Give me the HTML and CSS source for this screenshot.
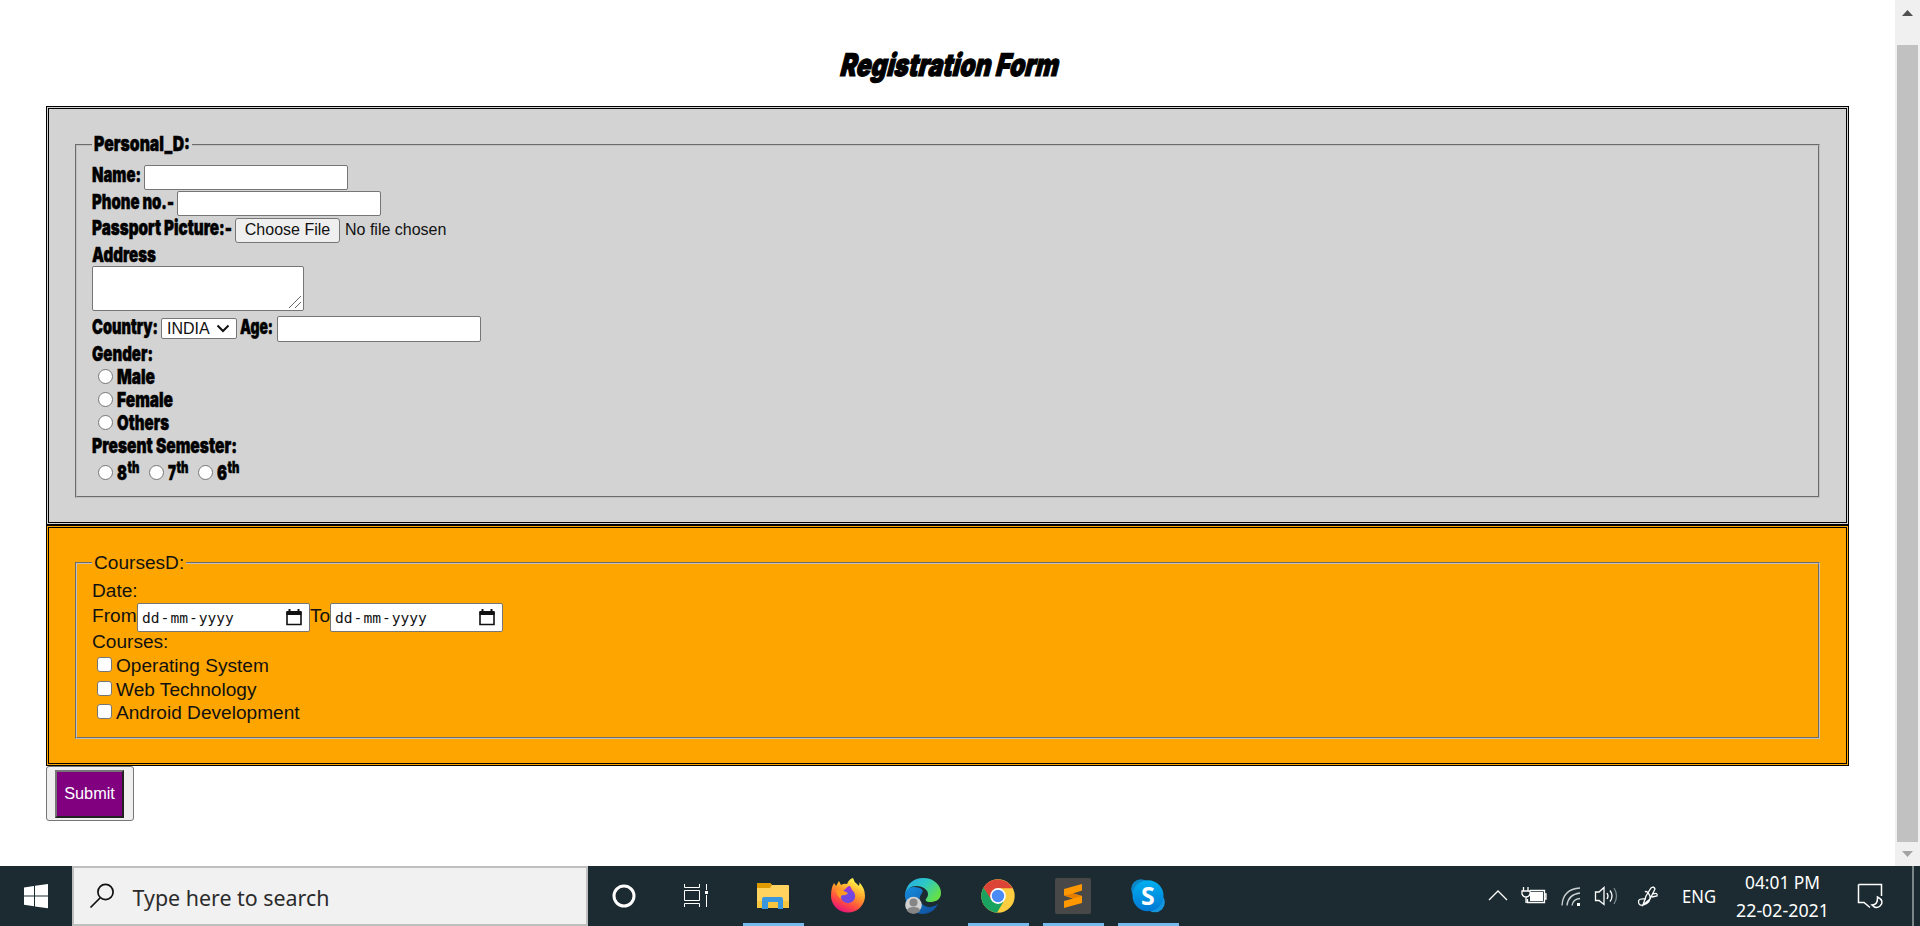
FILE: index.html
```html
<!DOCTYPE html>
<html lang="en">
<head>
<meta charset="utf-8">
<title>Registration Form</title>
<link rel="stylesheet" href="styles.css">
</head>
<body>
<div class="window">
  <main class="page">
    <h1 class="title"><svg class="heading" width="240" height="40"><text transform="translate(2 32) skewX(-14)" textLength="218" lengthAdjust="spacingAndGlyphs">Registration Form</text></svg></h1>
    <form class="form">
      <section class="panel personal">
        <fieldset class="group">
          <legend class="legend"><svg class="label" width="96" height="24"><text y="18" textLength="96" lengthAdjust="spacingAndGlyphs">Personal_D:</text></svg></legend>
          <div class="row name"><svg class="label" width="52" height="24"><text y="18" textLength="49" lengthAdjust="spacingAndGlyphs">Name:</text></svg><span class="box input"></span></div>
          <div class="row phone"><svg class="label" width="85" height="24"><text y="18" textLength="82" lengthAdjust="spacingAndGlyphs">Phone no.-</text></svg><span class="box input"></span></div>
          <div class="row picture"><svg class="label" width="143" height="24"><text y="18" textLength="140" lengthAdjust="spacingAndGlyphs">Passport Picture:-</text></svg><span class="box file">Choose File</span><span class="nofile">No file chosen</span></div>
          <div class="row address"><svg class="label" width="70" height="22"><text y="18" textLength="64" lengthAdjust="spacingAndGlyphs">Address</text></svg></div>
          <div class="box textarea"><svg width="14" height="14" viewBox="0 0 14 14"><path d="M1 13L13 1M7 13L13 7" stroke="#666" fill="none"/></svg></div>
          <div class="row country"><svg class="label" width="69" height="24"><text y="18" textLength="66" lengthAdjust="spacingAndGlyphs">Country:</text></svg><span class="box select">INDIA<svg width="14" height="9" viewBox="0 0 14 9"><path d="M1.5 1.5L7 7L12.500 1.500" fill="none" stroke="#111" stroke-width="2"/></svg></span><svg class="label" width="37" height="24"><text y="18" textLength="33" lengthAdjust="spacingAndGlyphs">Age:</text></svg><span class="box input age"></span></div>
          <div class="row"><svg class="label" width="70" height="23"><text y="18" textLength="61" lengthAdjust="spacingAndGlyphs">Gender:</text></svg></div>
          <div class="row"><i class="radio"></i><svg class="label" width="60" height="23"><text y="18" textLength="38" lengthAdjust="spacingAndGlyphs">Male</text></svg></div>
          <div class="row"><i class="radio"></i><svg class="label" width="60" height="23"><text y="18" textLength="56" lengthAdjust="spacingAndGlyphs">Female</text></svg></div>
          <div class="row"><i class="radio"></i><svg class="label" width="60" height="23"><text y="18" textLength="52" lengthAdjust="spacingAndGlyphs">Others</text></svg></div>
          <div class="row"><svg class="label" width="150" height="23"><text y="18" textLength="145" lengthAdjust="spacingAndGlyphs">Present Semester:</text></svg></div>
          <div class="row semester">
            <i class="radio"></i><svg class="label" width="26" height="23"><text y="18" textLength="10" lengthAdjust="spacingAndGlyphs">8</text><text class="sup" x="10.500" y="11" textLength="12" lengthAdjust="spacingAndGlyphs">th</text></svg>
            <i class="radio"></i><svg class="label" width="24" height="23"><text y="18" textLength="8" lengthAdjust="spacingAndGlyphs">7</text><text class="sup" x="8.500" y="11" textLength="12" lengthAdjust="spacingAndGlyphs">th</text></svg>
            <i class="radio"></i><svg class="label" width="26" height="23"><text y="18" textLength="10" lengthAdjust="spacingAndGlyphs">6</text><text class="sup" x="10.500" y="11" textLength="12" lengthAdjust="spacingAndGlyphs">th</text></svg>
          </div>
        </fieldset>
      </section>
      <section class="panel courses">
        <fieldset class="group">
          <legend class="legend">CoursesD:</legend>
          <div class="line">Date:</div>
          <div class="dates"><span class="word from">From</span><span class="box date"><span class="mono"><b>dd</b><b>-</b><b>mm</b><b>-</b><b>yyyy</b></span><svg width="16" height="17" viewBox="0 0 16 17"><path d="M1 3.500H15V15.500H1Z" fill="none" stroke="#111" stroke-width="1.600"/><path d="M.5 2H15.500V6H.5ZM2.500 0H4.500V3H2.500ZM11.500 0H13.500V3H11.500Z" fill="#111"/></svg></span><span class="word to">To</span><span class="box date"><span class="mono"><b>dd</b><b>-</b><b>mm</b><b>-</b><b>yyyy</b></span><svg width="16" height="17" viewBox="0 0 16 17"><path d="M1 3.500H15V15.500H1Z" fill="none" stroke="#111" stroke-width="1.600"/><path d="M.5 2H15.500V6H.5ZM2.500 0H4.500V3H2.500ZM11.500 0H13.500V3H11.500Z" fill="#111"/></svg></span></div>
          <div class="line caption">Courses:</div>
          <div class="line option"><i class="check"></i>Operating System</div>
          <div class="line option"><i class="check"></i>Web Technology</div>
          <div class="line option"><i class="check"></i>Android Development</div>
        </fieldset>
      </section>
      <div class="submit-outer"><span class="submit">Submit</span></div>
    </form>
  </main>
  <div class="scrollbar">
    <svg width="25" height="45" viewBox="0 0 25 45"><path d="M7 16L12.500 10L18 16Z" fill="#505050"/></svg>
    <div class="thumb"></div>
    <svg width="25" height="24" viewBox="0 0 25 24"><path d="M7 9L12.500 15L18 9Z" fill="#a3a3a3"/></svg>
  </div>
</div>
<footer class="taskbar">
  <svg width="72" height="60" viewBox="0 866 72 60"><path fill="#fff" d="M24 887.400L34 886V895.500H24ZM35 885.800L48 884V895.500H35ZM24 896.500H34V906.200L24 904.800ZM35 896.500H48V908.200L35 906.400Z"/></svg>
  <div class="search">
    <svg width="58" height="56" viewBox="74 868 58 56"><circle cx="105.500" cy="892" r="7.600" fill="none" stroke="#111" stroke-width="1.700"/><path d="M100 898L90.500 907.500" stroke="#111" stroke-width="1.700"/></svg>
    <svg class="ui dark" width="210" height="56" viewBox="132 868 210 56"><text x="132.500" y="905.500" font-size="22" textLength="197" lengthAdjust="spacingAndGlyphs">Type here to search</text></svg>
  </div>
  <svg width="73" height="60" viewBox="588 866 73 60"><circle cx="624" cy="896" r="10" fill="none" stroke="#fff" stroke-width="3"/></svg>
  <svg width="75" height="60" viewBox="661 866 75 60"><path d="M684.500 884V887.500H699.500V884M684.500 890.500H699.500V900.500H684.500ZM684.500 907V903.500H699.500V907M706.500 884V890M706.500 895V907" fill="none" stroke="#fff" stroke-width="1"/><path d="M705 891H708V894H705Z" fill="#fff"/></svg>
  <svg width="75" height="60" viewBox="736 866 75 60"><path d="M757 884Q757 883 758 883H770L772 885H788Q789 885 789 886V908H757Z" fill="#ffd35e"/><path d="M757 884Q757 883 758 883H770L772 885L770 888H757Z" fill="#e09b00"/><path d="M757 901H789V908H757Z" fill="#f8c63e"/><path d="M762 909V899Q762 897 764 897H781Q783 897 783 899V909H778V902H768V909Z" fill="#3a96dd"/><path d="M743 923H804V926H743Z" fill="#76b9ed"/></svg>
  <svg width="75" height="60" viewBox="811 866 75 60">
    <defs><linearGradient id="ff" x1=".8" y1="0" x2=".3" y2="1"><stop offset=".1" stop-color="#fff14a"/><stop offset=".45" stop-color="#ff9a2a"/><stop offset=".75" stop-color="#ff4545"/><stop offset="1" stop-color="#e01080"/></linearGradient></defs>
    <path d="M834 883L836 886L839 881L841 885Q844 883 847 884Q849 879 853 878Q854 882 857 884L859 886Q860 883 859 882Q865 888 865 896A17 16.500 0 0 1 831 896Q831 888 834 883Z" fill="url(#ff)"/><circle cx="848" cy="896" r="7.200" fill="#7148df"/><path d="M844 891Q850 889 854 894L850 886Q847 886 844 891Z" fill="#9a35d9"/><path d="M836 890Q841 888 844 891L848 893Q846 896 842 895Q840 897 841 899Q836 895 836 890Z" fill="#ff9b22"/></svg>
  <svg width="75" height="60" viewBox="886 866 75 60">
    <defs><linearGradient id="ea" x1="0" y1="0" x2="1" y2=".6"><stop offset="0" stop-color="#28a7e8"/><stop offset=".5" stop-color="#2cc8c8"/><stop offset="1" stop-color="#65e046"/></linearGradient><linearGradient id="eb" x1="0" y1="0" x2="1" y2="1"><stop offset="0" stop-color="#168de0"/><stop offset="1" stop-color="#104a96"/></linearGradient></defs>
    <path d="M905 897Q904 887 914 887Q925 888 922 893Q916 901 925 906Q931 909 938 904Q934 913 924 914Q908 914 905 897Z" fill="url(#eb)"/><path d="M905 894C907 883 914 878 923 878C935 878 941 886 941 893C941 900 935 902 930 902C926 902 925 900 926 899C932 892 924 886 916 886C910 886 906 890 905 894Z" fill="url(#ea)"/><circle cx="913.500" cy="905" r="8.300" fill="#d0d0d0"/><circle cx="913.500" cy="902.500" r="4" fill="#858585"/><path d="M907 911Q907 907 913.500 907T920 911Q917 914 913.500 914T907 911Z" fill="#858585"/></svg>
  <svg width="75" height="60" viewBox="961 866 75 60"><circle cx="998" cy="896" r="16.700" fill="#ffcd40"/><path d="M983.500 887.650A16.700 16.700 0 0 1 1012.500 888.300H998L990.800 900Z" fill="#db4437"/><path d="M983.500 887.650A16.700 16.700 0 0 0 997 912.700L1004.800 899.500L991.500 900Z" fill="#1aa260"/><circle cx="998" cy="896" r="7.900" fill="#fff"/><circle cx="998" cy="896" r="6.200" fill="#4b8bf5"/><path d="M968 923H1029V926H968Z" fill="#76b9ed"/></svg>
  <svg width="75" height="60" viewBox="1036 866 75 60"><rect x="1055" y="878" width="36" height="36" rx="2" fill="#484848"/><path d="M1064 889L1082 884V890.500L1073 893.500L1082 896V903L1064 908V901L1073 898.500L1064 895.500Z" fill="#ff9800"/><path d="M1064 895.500L1073 893.500L1082 896L1073 898.500Z" fill="#e47e00"/><path d="M1043 923H1104V926H1043Z" fill="#76b9ed"/></svg>
  <svg class="ui" width="75" height="60" viewBox="1111 866 75 60"><defs><linearGradient id="sk" x1="0" y1="0" x2="0" y2="1"><stop offset="0" stop-color="#00b0f0"/><stop offset="1" stop-color="#0078d4"/></linearGradient></defs><circle cx="1141" cy="889" r="9.800" fill="#0b86c9"/><circle cx="1155" cy="902.500" r="9.800" fill="#1695df"/><circle cx="1148" cy="895.700" r="15.500" fill="url(#sk)"/><text x="1148" y="904.500" text-anchor="middle" font-size="25" font-weight="700">S</text><path d="M1118 923H1179V926H1118Z" fill="#76b9ed"/></svg>
  <svg class="ui tray" width="434" height="60" viewBox="1486 866 434 60">
    <g fill="none" stroke="#fff" stroke-width="1.300">
      <path d="M1489 900L1498 891L1507 900"/>
      <path d="M1530 890.500H1544.500V902.500H1527.500V899M1544.500 894H1546V899H1544.500M1523.500 887V891M1528 887V891M1522 891H1530V894Q1529 897 1526 897Q1523 897 1522 894ZM1526 897V903"/>
      <path d="M1562 905.500Q1563 889 1580 888M1567 905.500Q1568 894.500 1580 893M1572 905.500Q1573 899 1580 898.500" stroke="#cdd2d3"/>
      <path d="M1595.500 892H1599L1604 887.500V904.500L1599 900.500H1595.500Z"/>
      <path d="M1607 893Q1609 896 1607 899M1610 890.500Q1614 896 1610 901.500"/><path d="M1614 888Q1619 896 1614 904" stroke="#7d888b"/>
      <path d="M1643 905L1646 896L1651 888Q1654 886 1655 889L1650 899ZM1646 899Q1638 898 1638.500 902Q1639 906 1643 905Q1651 903 1650 896Q1647 890 1645 892M1653 894Q1658 892 1657 896L1652 897"/>
      <path d="M1858.500 884.500H1881.500V896M1858.500 884.500V902.500H1864L1870 907.500M1877.500 897Q1885 901 1880 906Q1876 909.500 1872 905Q1878 905 1877.500 897Z" stroke-width="1.500"/>
    </g>
    <path d="M1530 892H1543V901H1530ZM1577 903H1580V906H1577Z" fill="#fff"/>
    <text x="1682" y="903" font-size="18" textLength="34" lengthAdjust="spacingAndGlyphs">ENG</text>
    <text x="1745" y="889" font-size="18" textLength="75" lengthAdjust="spacingAndGlyphs">04:01 PM</text>
    <text x="1736" y="917" font-size="18" textLength="93" lengthAdjust="spacingAndGlyphs">22-02-2021</text>
    <path d="M1912 866H1914V926H1912Z" fill="#7b8689"/>
  </svg>
</footer>
</body>
</html>
```
FILE: styles.css
```css
* { box-sizing: border-box; }
body { margin: 0; width: 1920px; height: 926px; overflow: hidden; background: #fff; color: #111; font-family: "Liberation Sans", Arial, sans-serif; }
svg { display: block; flex: none; }
.window { display: flex; height: 866px; }
.page { width: 1895px; padding: 44px 46px 0; }
.title { margin: 0; height: 62px; padding-left: 791px; }
.heading { overflow: visible; }
.heading text { font: 900 31px Inter, sans-serif; fill: #000; stroke: #000; stroke-width: 1.2px; }
.label { overflow: visible; }
.label text { font: 900 20.5px Inter, sans-serif; fill: #000; stroke: #000; stroke-width: .5px; }
.label .sup { font-size: 16.5px; }
.panel { border: 3px double #000; padding: 24px 26px; }
.personal { height: 419px; background: #d3d3d3; }
.courses { height: 241px; padding-top: 23px; background: #ffa500; font-size: 19.1px; }
.group { margin: 0; padding: 0 15px; border: 2px groove #c0c0c0; min-width: 0; }
.personal .group { height: 365px; }
.courses .group { height: 188px; }
.legend { height: 24px; padding: 0 2px; line-height: 24px; }
.courses .legend { line-height: 23px; }
.row { display: flex; align-items: flex-start; height: 23px; }
.name { margin-top: 7px; height: 27px; }
.name .input, .picture .file { margin-top: 1px; }
.phone { height: 26px; }
.picture { height: 27px; }
.address { height: 22px; }
.box { display: block; flex: none; background: #fff; border: 1px solid #767676; border-radius: 2px; }
.input { width: 204px; height: 25px; }
.age { height: 26px; }
.file { width: 105px; height: 25px; background: #efefef; border-radius: 3px; font-size: 16px; line-height: 21px; text-align: center; white-space: nowrap; }
.nofile { margin-left: 5px; font-size: 16px; line-height: 26px; }
.textarea { display: flex; width: 212px; height: 45px; align-items: flex-end; justify-content: flex-end; padding: 1px; }
.country { margin-top: 5px; height: 27px; }
.select { display: flex; align-items: center; gap: 6px; width: 76px; height: 21px; margin: 2px 3px 0 0; padding-left: 5px; font-size: 16px; line-height: 19px; }
.radio { flex: none; width: 15px; height: 15px; margin: 3px 4px 0 6px; border: 1px solid #767676; border-radius: 50%; background: #fff; }
.semester { margin-top: 4px; }
.line { height: 24px; line-height: 24px; }
.legend + .line { margin-top: 4px; }
.caption { margin-top: -2px; }
.dates { display: flex; height: 29px; line-height: 26px; }
.word { flex: none; white-space: nowrap; }
.from { width: 45px; }
.to { width: 20px; }
.date { display: flex; justify-content: space-between; width: 173px; height: 29px; padding: 5px 7px 0 4px; }
.mono { display: flex; gap: 1px; font: 14.6px/18px "DejaVu Sans Mono", monospace; }
.mono b { font-weight: 400; }
.option { display: flex; height: 23.6px; }
.check { flex: none; width: 15px; height: 15px; margin: 3px 4px 0 5px; border: 1px solid #767676; border-radius: 3px; background: #fff; }
.submit-outer { width: 88px; height: 55px; padding: 3px 9px 0 8px; background: #efefef; border: 1px solid #767676; border-radius: 3px; }
.submit { display: block; width: 69px; height: 48px; background: purple; border: 2px solid; border-color: #767676 #212121 #212121 #767676; color: #fff; font-size: 16.3px; line-height: 43px; text-align: center; }
.scrollbar { width: 25px; background: #f0f0f0; }
.thumb { width: 21px; height: 797px; margin-left: 2px; background: #c1c1c1; }
.taskbar { display: flex; height: 60px; background: #1c2b31; }
.search { display: flex; flex: none; width: 516px; height: 60px; background: #f1f1f1; border: 2px solid #bfbfbf; }
.ui text { font-family: "Noto Sans", sans-serif; fill: #fff; }
.dark text { fill: #2b2b2b; }
.tray { margin-left: auto; }
```
